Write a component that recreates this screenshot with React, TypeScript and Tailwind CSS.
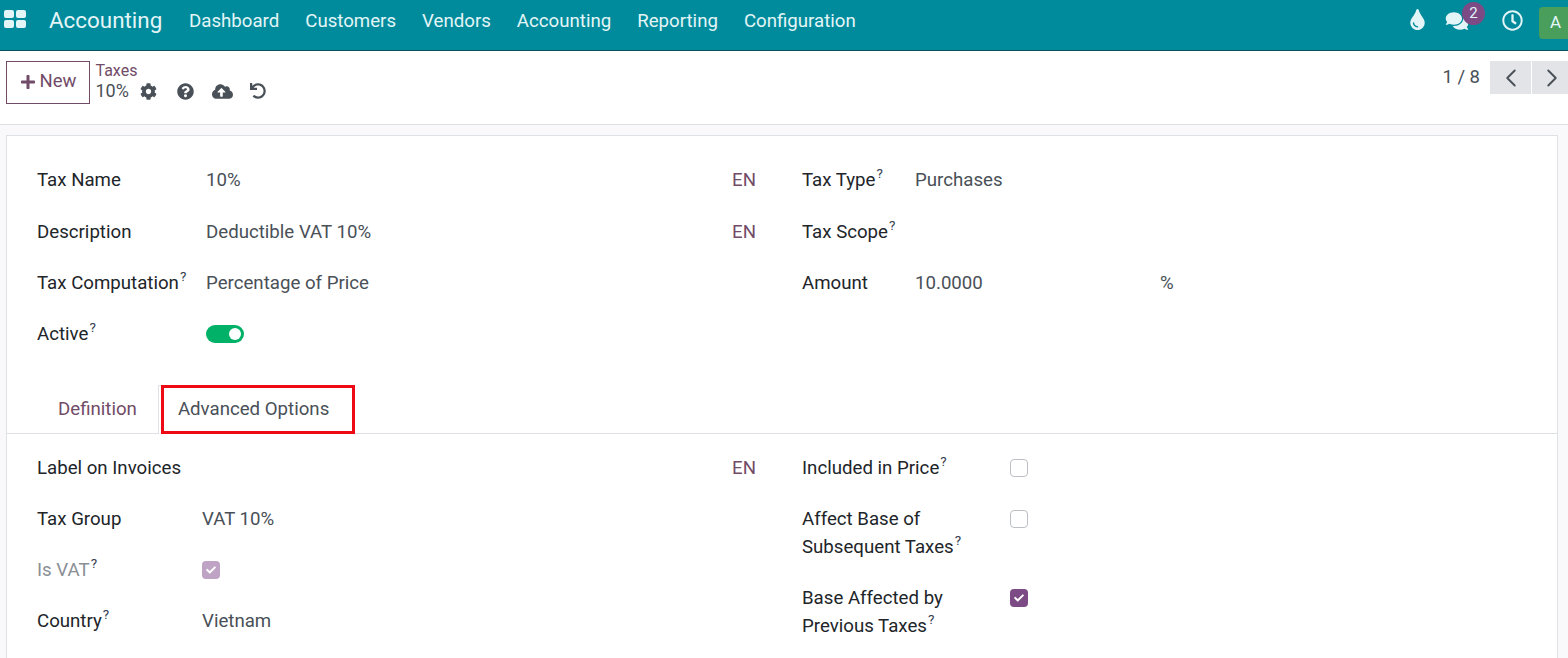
import React from "react";
import { FaTint, FaComments, FaCog, FaQuestionCircle, FaCloudUploadAlt, FaUndo, FaPlus, FaCheck, FaRegClock } from "react-icons/fa";
import { ChevronLeft, ChevronRight } from "lucide-react";

const Q = () => <sup className="text-[13.5px] ml-[1px] text-[#374151] -top-[8px] align-baseline leading-[0]">?</sup>;

function Label({ text, q, w, muted }: { text: string; q?: boolean; w: string; muted?: boolean }) {
  return (
    <div className={`${w} shrink-0 ${muted ? "text-[#8a8f96]" : "text-[#212529]"}`}>
      {text}
      {q && <Q />}
    </div>
  );
}

function Box({ checked, faded }: { checked?: boolean; faded?: boolean }) {
  if (checked)
    return (
      <div className={`w-[18px] h-[18px] rounded-[4px] flex items-center justify-center ${faded ? "bg-[#bfa3c5]" : "bg-[#7c4a85]"}`}>
        <FaCheck className="text-white w-[10px] h-[10px]" />
      </div>
    );
  return <div className="w-[18px] h-[18px] rounded-[4px] border border-[#bcc0c5] bg-white" />;
}

function TopRow({ left, right }: { left: React.ReactNode; right: React.ReactNode }) {
  return (
    <div className="flex h-[51.4px] items-center">
      <div className="w-[765px] shrink-0 flex items-center">{left}</div>
      <div className="flex items-center">{right}</div>
    </div>
  );
}

const En = () => <span className="text-[#714b67] ml-auto mr-[46px]">EN</span>;

export default function App() {
  const menu = ["Dashboard", "Customers", "Vendors", "Accounting", "Reporting", "Configuration"];
  return (
    <div className="h-[658px] w-[1568px] overflow-hidden bg-[#f9f9fb] text-[18.67px] text-[#495057]" style={{ fontFamily: "Roboto, sans-serif" }}>
      <header className="h-[51px] bg-[#008b9c] border-b border-[#06505b] flex items-center text-[#e3f5f7] overflow-hidden">
        <div className="ml-[4px] grid grid-cols-2 gap-[2px] w-[22px] -mt-[12px]">
          <i className="h-[8px] bg-[#e3f5f7] rounded-[2px]" />
          <i className="h-[8px] bg-[#e3f5f7] rounded-[2px]" />
          <i className="h-[8px] bg-[#e3f5f7] rounded-[2px]" />
          <i className="h-[8px] bg-[#e3f5f7] rounded-[2px]" />
        </div>
        <div className="ml-[23px] text-[22.4px] -mt-[8px] w-[140px]">Accounting</div>
        <nav className="flex gap-[26px] -mt-[8px]">
          {menu.map((m) => (
            <span key={m}>{m}</span>
          ))}
        </nav>
        <div className="ml-auto flex items-center relative -mt-[11px]">
          <FaTint className="w-[15px] h-[21px] mr-[20px]" />
          <div className="relative mr-[33px] mt-[2px]">
            <FaComments className="w-[24px] h-[20px]" />
            <span className="absolute -top-[9px] left-[17px] w-[23px] h-[23px] rounded-full bg-[#7c4a85] text-[15px] flex items-center justify-center">2</span>
          </div>
          <FaRegClock className="w-[21px] h-[21px] mr-[16px] mt-[1px]" />
          <div className="w-[29px] h-[32px] bg-[#4a9e5c] rounded-l-[4px] text-[17px] flex items-center justify-center mt-[6px] pl-[4px]">A</div>
        </div>
      </header>

      <div className="h-[74px] bg-white border-b border-[#dee2e6] flex items-start relative">
        <button className="ml-[6px] mt-[10px] w-[84px] h-[43px] border border-[#714b67] text-[#714b67] flex items-center justify-center gap-[4px] text-[18.5px] pb-[2px]">
          <FaPlus className="w-[16px] h-[16px]" />
          New
        </button>
        <div className="ml-[5.5px] mt-[10px]">
          <div className="text-[#714b67] text-[16px] leading-[19px]">Taxes</div>
          <div className="flex items-center h-[22px] leading-[22px] text-[18px]">
            <span>10%</span>
            <FaCog className="w-[17px] h-[17px] ml-[11.5px]" />
            <FaQuestionCircle className="w-[17px] h-[17px] ml-[20px]" />
            <FaCloudUploadAlt className="w-[21px] h-[19px] ml-[18px]" />
            <FaUndo className="w-[16px] h-[16px] ml-[17px]" />
          </div>
        </div>
        <div className="ml-auto flex items-start mt-[10px]">
          <span className="mt-[3px] mr-[10px] text-[18.5px]">1 / 8</span>
          <div className="w-[41px] h-[33px] bg-[#e2e4e8] flex items-center justify-center mr-[1px]">
            <ChevronLeft className="w-[30px] h-[30px]" strokeWidth={1.5} />
          </div>
          <div className="w-[36px] h-[33px] bg-[#e2e4e8] flex items-center justify-center pl-[4px]">
            <ChevronRight className="w-[30px] h-[30px]" strokeWidth={1.5} />
          </div>
        </div>
      </div>

      <main className="ml-[6px] mr-[10px] mt-[10px] bg-white border border-[#dee2e6] h-[600px] relative">
        <div className="pl-[30px] pt-[18.5px]">
          <TopRow
            left={<><Label text="Tax Name" w="w-[169px]" /><span>10%</span><En /></>}
            right={<><Label text="Tax Type" q w="w-[113px]" /><span>Purchases</span></>}
          />
          <TopRow
            left={<><Label text="Description" w="w-[169px]" /><span>Deductible VAT 10%</span><En /></>}
            right={<Label text="Tax Scope" q w="w-[113px]" />}
          />
          <TopRow
            left={<><Label text="Tax Computation" q w="w-[169px]" /><span>Percentage of Price</span></>}
            right={<><Label text="Amount" w="w-[113px]" /><span className="w-[245px]">10.0000</span><span>%</span></>}
          />
          <TopRow
            left={
              <>
                <Label text="Active" q w="w-[169px]" />
                <div className="w-[38px] h-[18px] rounded-full bg-[#00b167] flex items-center justify-end pr-[3px]">
                  <i className="w-[12px] h-[12px] rounded-full bg-white" />
                </div>
              </>
            }
            right={null}
          />
        </div>

        <div className="mt-[24.5px] h-[49px] border-b border-[#dee2e6] flex pl-[30px] relative">
          <div className="px-[21px] pt-[10px] text-[#714b67]">Definition</div>
          <div className="border border-b-0 border-[#dee2e6] bg-white h-[49px] pl-[19px] pr-[24px] pt-[9px] relative">Advanced Options</div>
          <div className="absolute left-[154px] top-0 w-[194px] h-[49px] border-[3px] border-[#ee0a14] pointer-events-none" />
        </div>

        <div className="pl-[30px] pt-[9px]">
          <div className="flex">
            <div className="w-[765px] shrink-0">
              <div className="h-[51px] flex items-center"><Label text="Label on Invoices" w="w-[165px]" /><En /></div>
              <div className="h-[51px] flex items-center"><Label text="Tax Group" w="w-[165px]" /><span>VAT 10%</span></div>
              <div className="h-[51px] flex items-center"><Label text="Is VAT" q muted w="w-[165px]" /><Box checked faded /></div>
              <div className="h-[51px] flex items-center"><Label text="Country" q w="w-[165px]" /><span>Vietnam</span></div>
            </div>
            <div>
              <div className="h-[51px] flex items-center">
                <Label text="Included in Price" q w="w-[208px]" />
                <Box />
              </div>
              <div className="h-[90px] flex items-start pt-[11px] leading-[28px] text-[#212529]">
                <div className="w-[208px]">Affect Base of<br />Subsequent Taxes<Q /></div>
                <div className="mt-[5px]"><Box /></div>
              </div>
              <div className="flex items-start leading-[28px] text-[#212529]">
                <div className="w-[208px]">Base Affected by<br />Previous Taxes<Q /></div>
                <div className="mt-[5px]"><Box checked /></div>
              </div>
            </div>
          </div>
        </div>
      </main>
    </div>
  );
}
